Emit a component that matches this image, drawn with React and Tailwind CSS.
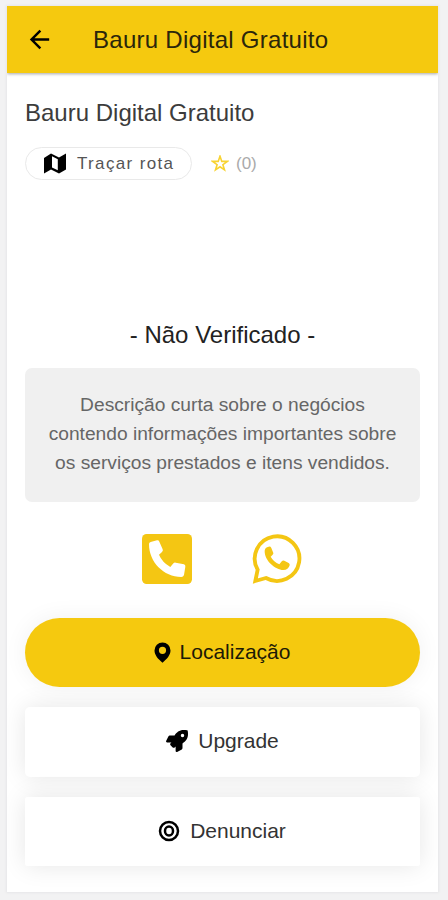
import { FaRocket } from "react-icons/fa";
import { IoMdArrowBack } from "react-icons/io";

function Target() {
  return (
    <svg className="size-[22px] shrink-0" viewBox="0 0 22 22" fill="none" stroke="#000">
      <circle cx="11" cy="11" r="9" strokeWidth="2.5" />
      <ellipse cx="11" cy="11" rx="4" ry="4.5" strokeWidth="2.5" />
    </svg>
  );
}

function Star() {
  return (
    <svg className="size-[18px] shrink-0" viewBox="0 0 18 18" fill="none" stroke="#f8d332" strokeWidth="1.6">
      <path d="M9 1.2 10.8 6.4H16.3L11.9 9.7 13.5 14.9 9 11.8 4.5 14.9 6.1 9.7 1.7 6.4H7.2Z" />
    </svg>
  );
}

function FoldedMap() {
  return (
    <svg className="h-[21px] w-[22px] shrink-0" viewBox="0 0 22 21" fill="#000">
      <path fillRule="evenodd" d="M0 5 7 .5 15 4.5 22 .5V16.5L15 20.5 7 16.5 0 20.5ZM8 3.2V14.4L13.8 17.3V6.2Z" />
    </svg>
  );
}

function Pin() {
  return (
    <svg className="h-[21px] w-[17px] shrink-0" viewBox="0 0 17 21" fill="#000">
      <path fillRule="evenodd" d="M8.5 .5A8 8 0 0 0 .5 8.5C.5 13 4 17 8.5 20.7 13 17 16.5 13 16.5 8.5A8 8 0 0 0 8.5 .5ZM8.5 4.7A3.6 3.6 0 1 1 8.5 11.9 3.6 3.6 0 0 1 8.5 4.7Z" />
    </svg>
  );
}

function Phone() {
  return (
    <svg className="size-[50px] shrink-0" viewBox="0 0 150 150">
      <rect width="150" height="150" rx="14" fill="#f4c613" />
      <path fill="#fff" d="M21 30Q21 25 26 24L45 19Q50 18 52 23L62 46Q64 51 60 54L51 62Q60 84 85 99L93 89Q97 85 101 86L126 91Q131 93 130 98L126 123Q124 129 118 129C65 128 21 85 21 30Z" />
    </svg>
  );
}

function Chat() {
  return (
    <svg className="size-[50px] shrink-0" viewBox="0 0 150 150">
      <path fill="none" stroke="#f4c613" strokeWidth="11.5" d="M10 141 17 107A67 67 0 1 1 42 132Z" />
      <path fill="#f4c613" d="M38 50Q39 39 50 38Q56 37 58 42L64 57Q65 61 56 68Q65 84 82 91L90 81Q93 78 97 80L110 87Q114 89 113 94Q109 108 94 108C70 107 37 80 38 50Z" />
    </svg>
  );
}

export default function App() {
  return (
    <div className="h-[900px] w-[448px] bg-[#f2f2f3] pt-[6px] pl-[7px] font-['Liberation_Sans',Arial,sans-serif]">
      <main className="flex h-[886px] w-[431px] flex-col overflow-hidden bg-white shadow-[0_0_2px_1px_#e7e7e9]">
        <header className="flex h-[67px] shrink-0 items-center bg-[#f5c90f] pl-[18px] shadow-[0_1px_3px_rgba(0,0,0,0.35)]">
          <IoMdArrowBack className="size-[29px] text-black" />
          <span className="ml-[39px] text-[24px] tracking-[0.27px] text-[#2b260b]">Bauru Digital Gratuito</span>
        </header>
        <section className="flex flex-col px-[18px]">
          <h1 className="mt-[22px] text-[24px] leading-[36px] text-[#3c3c3c]">Bauru Digital Gratuito</h1>
          <div className="mt-[16px] flex h-[33px] items-center">
            <button className="flex h-[33px] w-[167px] items-center rounded-full border border-[#e9e9e9] pl-[18px]">
              <FoldedMap />
              <span className="ml-[11px] text-[17px] tracking-[1.35px] whitespace-nowrap text-[#555]">Traçar rota</span>
            </button>
            <span className="ml-[19px] flex items-center">
              <Star />
              <span className="ml-[7px] text-[17px] text-[#aaa]">(0)</span>
            </span>
          </div>
          <h2 className="mt-[137px] text-center text-[24px] leading-[36px] text-[#222]">- Não Verificado -</h2>
          <p className="mt-[15px] h-[134px] rounded-[7px] bg-[#f0f0f0] px-[20px] pt-[23px] text-center text-[19.2px] leading-[28.8px] text-[#666]">
            Descrição curta sobre o negócios contendo informações importantes sobre os serviços prestados e itens vendidos.
          </p>
          <div className="mt-[28px] flex h-[58px] items-center justify-center gap-[60px] pr-px">
            <Phone />
            <Chat />
          </div>
          <button className="mt-[30px] flex h-[69px] shrink-0 items-center justify-center gap-[9px] rounded-full bg-[#f5c90f] pr-px pb-px text-[21px] text-[#1d1a06] shadow-[0_0_24px_rgba(0,0,0,0.06)]">
            <Pin />
            Localização
          </button>
          <button className="mt-[20px] flex h-[70px] shrink-0 items-center justify-center gap-[10px] rounded-[5px] bg-white pb-[2px] text-[21px] text-[#333] shadow-[0_0_24px_rgba(0,0,0,0.1)]">
            <FaRocket className="size-[22px] text-black" />
            Upgrade
          </button>
          <button className="mt-[20px] flex h-[69px] shrink-0 items-center justify-center gap-[10px] rounded-[2px] bg-white pr-px pb-[2px] text-[21px] text-[#333] shadow-[0_0_24px_rgba(0,0,0,0.1)]">
            <Target />
            Denunciar
          </button>
        </section>
      </main>
    </div>
  );
}
